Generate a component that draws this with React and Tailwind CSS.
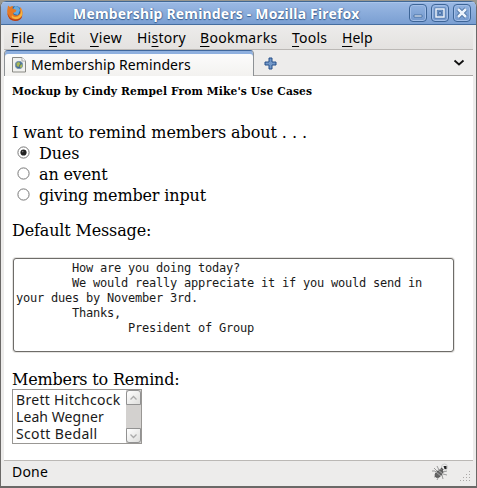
const UI = "font-['Noto_Sans','Open_Sans',sans-serif]";
const SERIF = "font-['DejaVu_Serif',serif]";

function FirefoxIcon() {
  return (
    <svg width="18" height="18" viewBox="0 0 18 18" className="block">
      <circle cx="9.5" cy="8.5" r="6.5" fill="#2468a8" />
      <path d="M9 2q4 0 5 4l-2 5-4-1-2-3z" fill="#68a9dc" />
      <path d="M2 1.500l2 1.500Q5 2 7 2L6.500 4.500l4 1.500-1 2-2.500 1q.5 3 4 2.500 4-1 3-5.500V3q3 3 2.500 7Q15.500 16.500 9 16.500 3 16.500 1.500 11 .7 7 2 1.500z" fill="#e77922" />
      <path d="M14.500 4q1.500 4-.5 6.500-2 3-5.500 2.500-2-.5-2.500-2-1 2 .5 3 4 2.500 8-.5 2.500-2.500 1.500-6-.5-2.500-1.500-3.500z" fill="#f8b43c" />
      <path d="M1.500 9q.5 7.500 7.500 8 6.500 0 7.500-6-2 4.500-7.500 4.500-5.500-.5-7.500-6.500z" fill="#b63d16" />
    </svg>
  );
}

function WindowButton({ children }) {
  return (
    <div className="flex h-[18px] w-[18px] items-center justify-center rounded-[4px] border border-[#3d6597] bg-linear-to-b from-[#91b2e0] to-[#7499cd] shadow-[inset_0_0_0_1px_#a2bee7]">
      <svg width="16" height="16" viewBox="0 0 16 16" className="block shrink-0">{children}</svg>
    </div>
  );
}

const menus = [
  ["", "F", "ile", "w-[38px] tracking-[0.250px]"],
  ["", "E", "dit", "w-[41px] tracking-[0.250px]"],
  ["", "V", "iew", "w-[47px] tracking-[0.350px]"],
  ["Hi", "s", "tory", "w-[63px] tracking-[0.250px]"],
  ["", "B", "ookmarks", "w-[92px] tracking-[0.350px]"],
  ["", "T", "ools", "w-[50px] tracking-[0.250px]"],
  ["", "H", "elp", "w-[40px]"],
];

function Radio({ label, checked }) {
  return (
    <div className="flex h-[21px] items-center">
      <svg width="13" height="13" viewBox="0 0 13 13" className="-mt-[3px] ml-[5px] block">
        <circle cx="6.500" cy="6.500" r="5.600" fill="#fff" stroke="#777" />
        {checked && <circle cx="6.500" cy="6.500" r="3.100" fill="#222" />}
        {checked && <circle cx="5.700" cy="5.600" r=".8" fill="#777" />}
      </svg>
      <span className="ml-[9px] tracking-[-0.150px] whitespace-nowrap">{label}</span>
    </div>
  );
}

function ScrollButton({ up }) {
  return (
    <div className={`flex h-[15px] w-[15px] items-center justify-center border border-[#929292] bg-linear-to-br from-white to-[#dededc] ${up ? "rounded-t-[3px]" : "rounded-b-[3px]"}`}>
      <svg width="9" height="6" viewBox="0 0 9 6" fill="none" stroke="#aaa" strokeWidth="1.300">
        <path d={up ? "M1.500 4.500l3-3 3 3" : "M1.500 1.500l3 3 3-3"} />
      </svg>
    </div>
  );
}

export default function App() {
  return (
    <div className="h-[488px] w-[477px] overflow-hidden bg-[#99978f] pt-px text-black">
      <div className="flex h-[487px] flex-col overflow-hidden rounded-t-[6px] border-x border-b-2 border-[#6b6967] bg-[#edeceb]">
        <header className="flex h-6 shrink-0 items-center border-t border-b border-t-[#416895] border-b-[#456d9f] bg-linear-to-b from-[#9bb9e4] to-[#7a9fd2] pr-[5px] pl-[5px] shadow-[inset_0_1px_0_#a9c5ec]">
          <FirefoxIcon />
          <div className={`ml-[49px] flex-1 text-[14px] font-bold whitespace-nowrap text-white [text-shadow:0_1px_1px_#355d91,1px_0_1px_#5078aa] ${UI}`}>
            <span className="tracking-[0.180px]">Membership Reminders - Mozilla Firefox</span>
          </div>
          <div className="flex gap-[4px]">
            <WindowButton><path d="M4 10h8v2H4z" fill="#edf3fc" stroke="#3d6597" strokeWidth=".8" /></WindowButton>
            <WindowButton><path d="M4 4h8v8H4z" fill="none" stroke="#4d75a8" strokeWidth="3" /><path d="M4 4h8v8H4z" fill="none" stroke="#edf3fc" strokeWidth="1.500" /><path d="M6.500 6.500h3v3h-3z" fill="none" stroke="#4d75a8" strokeWidth="1" /></WindowButton>
            <WindowButton><path d="M4 4l8 8M12 4l-8 8" stroke="#3d6597" strokeWidth="4" /><path d="M4 4l8 8M12 4l-8 8" stroke="#edf3fc" strokeWidth="2.500" /></WindowButton>
          </div>
        </header>

        <nav className={`mr-[3px] ml-[3px] flex h-[25px] shrink-0 border-b border-[#bbb8b5] bg-linear-to-b from-[#edeceb] to-[#e4e2e0] pl-[7px] text-[14px] leading-[26px] ${UI}`}>
          {menus.map(([before, key, after, width]) => (
            <span key={key} className={`shrink-0 whitespace-nowrap ${width}`}>
              {before}<span className="underline decoration-1 underline-offset-[3px]">{key}</span>{after}
            </span>
          ))}
        </nav>

        <div className="mr-[3px] ml-[3px] flex h-[26px] shrink-0">
          <div className={`flex w-[250px] items-center rounded-t-[4px] border border-b-0 border-[#8d9195] border-t-[#40679c] bg-linear-to-b from-[#fdfdfd] to-[#f3f2f0] pt-px pl-[7px] text-[14px] shadow-[inset_0_3px_0_#8fb0df] ${UI}`}>
            <svg width="15" height="17" viewBox="0 0 15 17" className="block shrink-0">
              <path d="M.5 1.500h9.500l3.500 3.500v11H.5z" fill="#f1f1ee" stroke="#898984" />
              <path d="M10 1.500V5h3.500" fill="#fff" stroke="#aaa" />
              <circle cx="7" cy="9" r="3.700" fill="#3c6598" stroke="#7b98b2" />
              <path d="M4.500 7l2-1 2 1-1 2-1 2-2-1zM9 8l1.500 1-1 3-2-1z" fill="#a9b957" />
            </svg>
            <span className="ml-[4px] tracking-[0.080px] whitespace-nowrap">Membership Reminders</span>
          </div>
          <div className="flex flex-1 items-center justify-between border-b border-[#aaa8a6] pt-px pr-[8px] pl-[10px]">
            <svg width="13" height="13" viewBox="0 0 13 13"><path d="M5 1h3v4h4v3H8v4H5V8H1V5h4z" fill="#7398c8" stroke="#254f89" strokeLinejoin="round" /></svg>
            <svg width="12" height="8" viewBox="0 0 12 8" fill="none" stroke="#111" strokeWidth="1.800"><path d="M1.500 1.500l4.500 4 4.500-4" /></svg>
          </div>
        </div>

        <main className={`mr-[3px] ml-[3px] flex h-[384px] shrink-0 flex-col items-start bg-white pl-2 text-[16px] tracking-[-0.080px] ${SERIF}`}>
          <h1 className="mt-[9px] h-[14px] text-[10.700px] leading-[14px] font-bold tracking-[0.130px] whitespace-nowrap">Mockup by Cindy Rempel From Mike's Use Cases</h1>
          <p className="mt-[23px] h-[21px] leading-[21px] whitespace-nowrap">I want to remind members about . . .</p>
          <Radio label="Dues" checked />
          <Radio label="an event" />
          <Radio label="giving member input" />
          <p className="mt-[14px] h-[21px] leading-[21px] tracking-[-0.150px] whitespace-nowrap">Default Message:</p>
          <pre className="mt-[16px] h-[96px] w-[443px] rounded-[4px] border-2 border-[#e5e4e2] bg-white p-0 font-['DejaVu_Sans_Mono',monospace] text-[12px] leading-[15px] font-normal tracking-[-0.224px] text-[#1a1a1a] outline-1 -outline-offset-2 outline-[#6e6c69]">
            <div className="pt-[2px] pl-[2px]">{"        How are you doing today?\n        We would really appreciate it if you would send in\nyour dues by November 3rd.\n        Thanks,\n                President of Group"}</div>
          </pre>
          <p className="mt-[16px] h-[20px] leading-[21px] tracking-[-0.170px] whitespace-nowrap">Members to Remind:</p>
          <div className={`flex h-[55px] w-[130px] justify-between border border-[#999794] bg-white text-[14px] leading-[17px] text-[#1a1a1a] ${UI}`}>
            <ul className="pt-[1px] pl-[3px] whitespace-nowrap">
              <li className="tracking-[0.300px]">Brett Hitchcock</li>
              <li className="tracking-[0.080px]">Leah Wegner</li>
              <li className="tracking-[0.350px]">Scott Bedall</li>
            </ul>
            <div className="flex w-[15px] flex-col justify-between bg-[#d3d1cf]">
              <ScrollButton up />
              <ScrollButton />
            </div>
          </div>
        </main>

        <footer className={`mr-[3px] ml-[3px] flex h-[26px] shrink-0 items-center border-t border-[#bbb8b5] pl-2 text-[14px] ${UI}`}>
          <span className="-mt-[4px] flex-1 tracking-[0.200px]">Done</span>
          <svg width="18" height="18" viewBox="0 0 18 18" className="-mt-[4px]" fill="none" stroke="#999" strokeWidth="1">
            <path d="M1 8h3l2 2M3 5l4 4M6 3l2 4M3 14l4-1M6 17l2-4M12 16l-1-4M16 12l-4-1M16 8l-4 1" />
            <ellipse cx="8" cy="10.500" rx="4.500" ry="2.600" transform="rotate(-45 8 10.5)" fill="#666" stroke="#555" />
            <path d="M5 9l5 4M7 7l5 4" stroke="#aaa" />
            <circle cx="13.500" cy="4" r="3" fill="#eee" stroke="#ccc" />
            <path d="M12.500 3h3v3h-2z" fill="#222" stroke="none" />
            <path d="M10 5l2 2" stroke="#555" strokeWidth="1.500" />
          </svg>
          <svg width="12" height="12" viewBox="0 0 12 12" className="mt-[5px] mr-[2px] ml-[10px]" fill="#aaa8a6">
            {[0, 1, 2, 3].flatMap((r) => Array.from({ length: r + 1 }, (_, c) => <rect key={`${r}-${c}`} x={10 - c * 3} y={1 + r * 3} width="1" height="1" />))}
          </svg>
        </footer>
      </div>
    </div>
  );
}
